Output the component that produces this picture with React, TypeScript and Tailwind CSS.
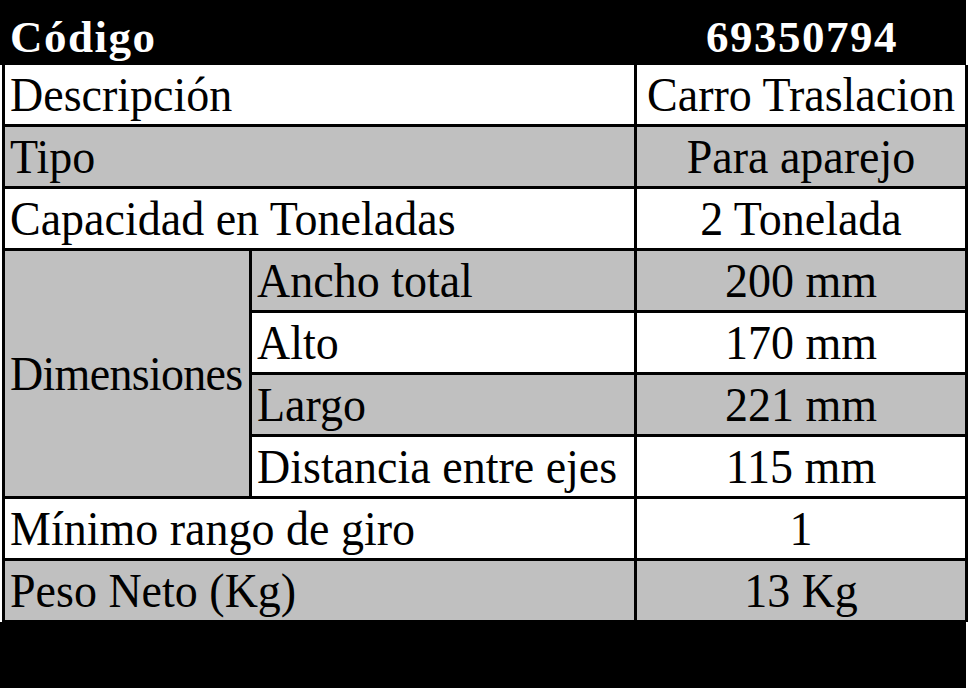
const GRAY = "bg-[#c0c0c0]";

type Row = { label: string; value: string; gray: boolean };

const topRows: Row[] = [
  { label: "Descripción", value: "Carro Traslacion", gray: false },
  { label: "Tipo", value: "Para aparejo", gray: true },
  { label: "Capacidad en Toneladas", value: "2 Tonelada", gray: false },
];

const dims: Row[] = [
  { label: "Ancho total", value: "200 mm", gray: true },
  { label: "Alto", value: "170 mm", gray: false },
  { label: "Largo", value: "221 mm", gray: true },
  { label: "Distancia entre ejes", value: "115 mm", gray: false },
];

const bottomRows: Row[] = [
  { label: "Mínimo rango de giro", value: "1", gray: false },
  { label: "Peso Neto (Kg)", value: "13 Kg", gray: true },
];

function Txt({ children }: { children: React.ReactNode }) {
  return <span className="inline-block scale-y-[1.07] whitespace-nowrap">{children}</span>;
}

function LabelCell({ row, span }: { row: Row; span?: boolean }) {
  return (
    <div
      className={`${row.gray ? GRAY : "bg-white"} ${span ? "col-span-2" : ""} flex items-center pl-[5px]`}
    >
      <Txt>{row.label}</Txt>
    </div>
  );
}

function ValueCell({ row }: { row: Row }) {
  return (
    <div className={`${row.gray ? GRAY : "bg-white"} flex items-center justify-center`}>
      <Txt>{row.value}</Txt>
    </div>
  );
}

export default function App() {
  return (
    <div
      className="h-[692px] w-[971px] overflow-hidden bg-white text-black"
      style={{ fontFamily: '"Liberation Serif", "Times New Roman", serif' }}
    >
      <div className="flex h-[65px] w-[966px] items-center bg-black text-[45px] font-bold leading-none tracking-[1.5px] text-white">
        <div className="flex-1 pl-[10px] pt-[9px]">Código</div>
        <div className="w-[328px] pt-[9px] text-center">69350794</div>
      </div>

      <div className="ml-[2px] grid w-[966px] grid-cols-[244px_382px_328px] auto-rows-[59px] gap-[3px] bg-black px-[3px] pb-[2px] text-[46px] leading-[59px]">
        {topRows.map((r) => (
          <div key={r.label} className="contents">
            <LabelCell row={r} span />
            <ValueCell row={r} />
          </div>
        ))}

        <div className={`${GRAY} row-span-4 flex items-center pl-[5px]`}>
          <span className="inline-block scale-y-[1.07] whitespace-nowrap tracking-[-0.7px]">Dimensiones</span>
        </div>
        {dims.map((r) => (
          <div key={r.label} className="contents">
            <LabelCell row={r} />
            <ValueCell row={r} />
          </div>
        ))}

        {bottomRows.map((r) => (
          <div key={r.label} className="contents">
            <LabelCell row={r} span />
            <ValueCell row={r} />
          </div>
        ))}
      </div>

      <div className="h-[66px] w-[966px] bg-black" />
    </div>
  );
}
